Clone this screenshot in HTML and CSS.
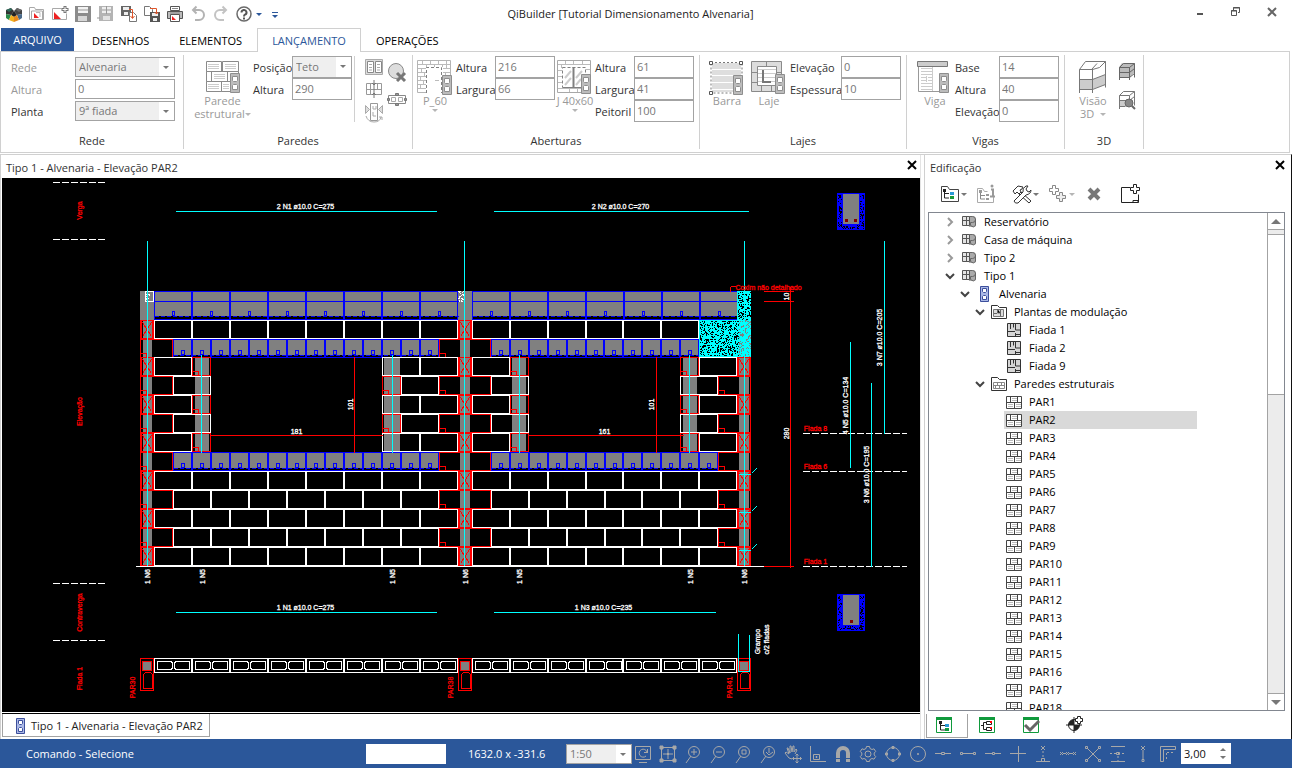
FILE: index.html
```html
<!DOCTYPE html>
<html lang="pt-BR">
<head>
    <meta charset="UTF-8">
    <meta name="viewport" content="width=device-width, initial-scale=1.0">
    <title>QiBuilder</title>
    <link rel="stylesheet" href="styles.css">
</head>
<body>
    <svg class="sprite" aria-hidden="true">
        <!-- quick access -->
        <symbol id="i-logo" viewBox="0 0 18 18">
            <path d="M1 5l5-2 3 3-3 4-5-1z" fill="#333"/><path d="M17 5l-5-2-3 3 3 4 5-1z" fill="#444"/>
            <path d="M1 5l5-2 1 2-3 2z" fill="#2d6a5a"/><path d="M17 5l-5-2-1 2 3 2z" fill="#666"/>
            <path d="M1 9l5 1-2 5-3-2z" fill="#2a8a4a"/><path d="M17 9l-5 1 2 5 3-2z" fill="#4a6a8a"/>
            <path d="M6 10l3-4 3 4-3 2z" fill="#222"/><path d="M4 15l2-5 3 2v5z" fill="#f3b01c"/><path d="M14 15l-2-5-3 2v5z" fill="#e8891c"/>
        </symbol>
        <symbol id="i-open" viewBox="0 0 18 18">
            <path d="M1.500 14.500v-12h5l1 2h8v10zM3.500 14v-8h11v8" fill="#fff" stroke="#a9a9a9"/>
            <path d="M6 13V8l5 5z" fill="#e22"/><path d="M8 7.500h4V12" fill="none" stroke="#bbb"/>
        </symbol>
        <symbol id="i-new" viewBox="0 0 18 18">
            <path d="M1.500 3.500h9m5 5v6h-14v-11" fill="#fff" stroke="#a9a9a9"/>
            <path d="M3 14V7l7 7z" fill="#e22"/><path d="M14 1v7M10.500 4.500h7" stroke="#777" stroke-width="3"/>
            <path d="M14 2v5M11.500 4.500h5" stroke="#fff"/>
        </symbol>
        <symbol id="i-save" viewBox="0 0 18 18">
            <path d="M1 1h16v16H1z" fill="#8b8b8b"/><path d="M4 2h10v6H4z" fill="#f2f2f2"/><path d="M4 11h9v5H4z" fill="#d6d6d6"/><path d="M4 5h10" stroke="#999"/>
        </symbol>
        <symbol id="i-saveall" viewBox="0 0 18 18">
            <path d="M2 1h14v15H2z" fill="#b4b4b4"/><path d="M5 2h9v6H5z" fill="#eee"/><path d="M9.500 1v8M5 5h9" stroke="#999"/><path d="M6 11h7v4H6z" fill="#e2e2e2"/><path d="M0 13h3" stroke="#999"/>
        </symbol>
        <symbol id="i-export" viewBox="0 0 18 18">
            <path d="M1 1h10v10H1z" fill="#666"/><path d="M3 2h6v3H3zM4 7h4v3H4z" fill="#eee"/>
            <path d="M9.500 7.500h4l3 3v6h-7z" fill="#fff" stroke="#777"/><path d="M9 4.500h3.500V13M10.500 11l2 2.500 2-2.500" fill="none" stroke="#e0552a"/>
        </symbol>
        <symbol id="i-import" viewBox="0 0 18 18">
            <path d="M1.500 1.500h5l3 3v6h-8z" fill="#fff" stroke="#777"/><path d="M7 7h10v10H7z" fill="#555"/><path d="M9 8h6v3H9zM10 13h4v3h-4z" fill="#eee"/>
            <path d="M7 3.500h6.500V9M11.500 7l2 2 2-2" fill="none" stroke="#e0552a"/>
        </symbol>
        <symbol id="i-print" viewBox="0 0 18 18">
            <path d="M4.500 1.500h9v4h-9z" fill="#fff" stroke="#555"/><path d="M1.500 6.500h15v7h-15z" fill="#bbb" stroke="#555"/>
            <path d="M4.500 9.500h9v7h-9z" fill="#fff" stroke="#555"/><path d="M6 15v-4l4 4z" fill="#e22"/><path d="M6 3.500h6M4 8h10" stroke="#888"/>
        </symbol>
        <symbol id="i-undo" viewBox="0 0 18 18"><path d="M4 5h6a5 5 0 0 1 0 10H6M7.500 1.500L4 5l3.500 3.500" fill="none" stroke="#b3b3b3" stroke-width="2"/></symbol>
        <symbol id="i-redo" viewBox="0 0 18 18"><path d="M14 5H8a5 5 0 0 0 0 10h4M10.500 1.500L14 5l-3.500 3.500" fill="none" stroke="#c3c3c3" stroke-width="2"/></symbol>
        <symbol id="i-help" viewBox="0 0 18 18">
            <circle cx="9" cy="9" r="7" fill="#fff" stroke="#6b6b6b" stroke-width="1.500"/><path d="M6.500 7.500a2.500 2.500 0 1 1 3.500 2.200q-1 .5-1 1.800M9 12.500v2" fill="none" stroke="#555" stroke-width="2"/>
        </symbol>

        <!-- ribbon -->
        <symbol id="cell" viewBox="0 0 10 20">
            <path d="M.5.5h9v19h-9z" fill="#bcbcbc" stroke="#8e8e8e"/>
            <path d="M2.500 3.500h5v4l-1 1h-3l-1-1zM2.500 16.500h5v-4l-1-1h-3l-1 1z" fill="#fff" stroke="#8e8e8e"/>
        </symbol>
        <symbol id="i-wall" viewBox="0 0 36 36">
            <g fill="#fff" stroke="#8a8a8a"><path d="M1.500 1.500h15v10h-15zM17.500 1.500h16v10h-16zM1.500 11.500h5v10h-5zM6.500 11.500h16v10h-16zM22.500 11.500h11v10h-11zM1.500 21.500h15v10h-15zM16.500 21.500h17v10h-17z"/></g>
            <path d="M3 4.500h11M3 6.500h11M3 8.500h11M20 4.500h11M20 6.500h11M20 8.500h11M9 14.500h11M9 16.500h11M9 18.500h11M3 24.500h11M3 26.500h11M3 28.500h11M18 24.500h6M18 26.500h6M18 28.500h6" stroke="#ccc"/>
            <use href="#cell" x="25" y="13" width="10" height="20"/>
        </symbol>
        <symbol id="i-door" viewBox="0 0 36 36">
            <path d="M.5.5h33v32H.5z" fill="#fff" stroke="#b4b4b4"/>
            <path d="M1 4.500h32M1 8.500h8M1 12.500h8M1 16.500h8M1 20.500h8M1 24.500h8M1 28.500h8M5.500 1v3M13.500 1v3M21.500 1v3M29.500 1v3M9.500 5v3M17.500 5v2M25.500 5v2M4.500 9v3M7.500 13v3M3.500 17v3M6.500 21v3M3.500 25v3M26 8.500h7M26 12.500h7M29.500 5v3M28.500 13v3" stroke="#bbb"/>
            <path d="M9.500 33V7.500h15V33" fill="#fff" stroke="#808080" stroke-dasharray="3 2"/><path d="M18 20.500h4" stroke="#bbb"/>
            <use href="#cell" x="25" y="15" width="10" height="20"/>
        </symbol>
        <symbol id="i-window" viewBox="0 0 36 36">
            <path d="M.5.5h33v32H.5z" fill="#fff" stroke="#a8a8a8"/>
            <path d="M1 4.500h32M1 10.500h4M1 16.500h4M1 22.500h4M1 28.500h24M8.500 1v3M16.500 1v3M25.500 1v3M4.500 5v3M12.500 29v3M20.500 29v3M29 9.500h4" stroke="#bbb"/>
            <path d="M5.500 7.500h23v20h-23z" fill="#fff" stroke="#808080" stroke-dasharray="3 2"/><path d="M16.500 7v21" stroke="#808080" stroke-width="2"/><path d="M6 27.500h19" stroke="#808080"/>
            <path d="M8 18l6-7M8 25l6-7M19 18l6-7M19 25l5-6" stroke="#ccc" stroke-width="2"/>
            <use href="#cell" x="24" y="14" width="10" height="20"/>
        </symbol>
        <symbol id="i-slab" viewBox="0 0 36 36">
            <path d="M3 3h29v6H3zM3 10h29v5H3zM3 16h29v6H3zM3 23h24v6H3zM3 30h24v2H3z" fill="#dedede"/>
            <path d="M2 2.500h31V33H2z" fill="none" stroke="#777" stroke-dasharray="2 2"/>
            <path d="M.5 1.500h3v3h-3zM30.500 1.500h3v3h-3zM.5 31.500h3v3h-3z" fill="#fff" stroke="#555"/>
            <use href="#cell" x="24" y="15" width="10" height="20"/>
        </symbol>
        <symbol id="i-laje" viewBox="0 0 36 36">
            <path d="M.5 1.500h30v30H.5z" fill="#ddd" stroke="#8a8a8a"/><path d="M6.500 6.500h19v19h-19z" fill="#fff" stroke="#8a8a8a"/>
            <path d="M15.500 2v4M1 12.500h5M1 22.500h5M10.500 26v5M20.500 26v5M26 12.500h4" stroke="#8a8a8a"/><path d="M7 9.500h18M7 13.500h18M7 17.500h18M7 21.500h18" stroke="#ccc"/>
            <path d="M12 10v12h8" fill="none" stroke="#777" stroke-width="2"/>
            <use href="#cell" x="24" y="14" width="10" height="20"/>
        </symbol>
        <symbol id="i-beam" viewBox="0 0 36 36">
            <path d="M.5 1.500h30v5H.5z" fill="#ccc" stroke="#777"/><path d="M1.500 7v24.500H22" fill="none" stroke="#999"/>
            <path d="M4 8.500h11M4 11.500h11M4 14.500h11M4 17.500h5M11 17.500h4M4 20.500h5M11 20.500h4M4 23.500h11M4 26.500h11M4 29.500h11M9.500 16v6M15.500 7v24" stroke="#ccc"/>
            <use href="#cell" x="22" y="13" width="10" height="20"/>
        </symbol>
        <symbol id="i-view" viewBox="0 0 36 36">
            <path d="M4 19h14v10H4zM18 19l12-4v10l-12 4z" fill="#ccc"/>
            <path d="M4.500 33V9.500l6-8h20l-6 6M30.500 1.500v26M4.500 9.500h12.500M17.500 9v24M17.500 9.500l7-2M4.500 19.500h13l13-5M4.500 29.500h13l13-5M22 3.500L17 9" fill="none" stroke="#777"/>
        </symbol>
        <symbol id="i-box" viewBox="0 0 20 20">
            <path d="M2 6h11v10H2zM13 6l4-4v10l-4 4zM5 2h12l-4 4H2z" fill="#bbb"/>
            <path d="M2.500 19V6.500l4-4h11v14M2.500 6.500h10M12.500 6v13M12.500 6.500l5-4M2.500 11.500h10l5-4M2.500 16.500h10l5-4" fill="none" stroke="#666"/>
        </symbol>
        <symbol id="i-boxfind" viewBox="0 0 20 20">
            <path d="M2 10h11v6H2z" fill="#ccc"/>
            <path d="M2.500 19V5.500l4-4h11v14M2.500 5.500h10v8M12.500 5.500l5-4M2.500 10.500h10l5-4M2.500 16.500h6" fill="none" stroke="#777"/><circle cx="12" cy="13" r="4" fill="#888" stroke="#666"/><path d="M15 16l3 3" stroke="#666" stroke-width="2"/>
        </symbol>
        <symbol id="i-w1" viewBox="0 0 20 18"><path d="M1.500 1.500h17v15h-17z" fill="#ddd" stroke="#aaa"/><path d="M3.500 3.500h6v11h-6zM11.500 3.500h6v11h-6z" fill="#fff" stroke="#888"/><path d="M5 6.500h3M5 9.500h3M5 12h3M13 6.500h3M13 9.500h3M13 12h3" stroke="#aaa"/></symbol>
        <symbol id="i-w2" viewBox="0 0 20 18"><path d="M2.500 3.500h15v11h-15z" fill="#fff" stroke="#999"/><path d="M2 9.500h16M6.500 4v5M13.500 4v5M6.500 10v4" stroke="#999"/><path d="M10 0v5M10 13v5M8 3l2 2 2-2M8 15l2-2 2 2" fill="none" stroke="#777"/><path d="M10 5v8" stroke="#777"/></symbol>
        <symbol id="i-w3" viewBox="0 0 20 22"><path d="M1.500 3.500l4 4-4 4zM18.500 3.500l-4 4 4 4z" fill="#ddd" stroke="#aaa"/><path d="M6.500 1.500h7v17h-7z" fill="#fff" stroke="#999"/><path d="M9 4v3h3v-3M9 10v4h3" fill="none" stroke="#aaa"/><path d="M2 14q2 6 8 6t7-5M15 15h3v3" fill="none" stroke="#aaa"/></symbol>
        <symbol id="i-w4" viewBox="0 0 20 20"><circle cx="9" cy="9" r="7.500" fill="#ddd" stroke="#888"/><path d="M10 11l8 8M18 11l-8 8" stroke="#777" stroke-width="3"/></symbol>
        <symbol id="i-w5" viewBox="0 0 20 14"><path d="M1.500 3.500h17v8h-17z" fill="#fff" stroke="#888"/><path d="M4.500 5.500h4v4h-4zM11.500 5.500h4v4h-4z" fill="#fff" stroke="#aaa"/><path d="M8.500 1.500h3v2h-3zM8.500 11.500h3v2h-3zM.5 6.500h2v2h-2zM17.500 6.500h2v2h-2z" fill="#999" stroke="#777"/></symbol>

        <!-- project panel -->
        <symbol id="i-ptree" viewBox="0 0 20 20"><path d="M1.500 17.500v-15h6l2 3h9v12z" fill="#fff" stroke="#444"/><path d="M4.500 6v8H9M4.500 9.500H9" fill="none" stroke="#222"/><path d="M3 5h3v3H3z" fill="#222"/><path d="M10 8h4v3h-4z" fill="#2a9ad6"/><path d="M10 12h4v3h-4z" fill="#1a9a3a"/></symbol>
        <symbol id="i-pinfo" viewBox="0 0 20 20"><path d="M1.500 18.500v-14h5l2 3h3M1.500 18.500h16v-7" fill="#fff" stroke="#aaa"/><path d="M4.500 7v8H9M4.500 11.500H9" fill="none" stroke="#888"/><path d="M3 6h3v3H3zM10 10h3v2h-3zM10 14h3v2h-3z" fill="#999"/><path d="M15 5.500h2v6M14 12.500h5" fill="none" stroke="#999" stroke-width="2"/><circle cx="16" cy="2" r="1.500" fill="#999"/></symbol>
        <symbol id="i-tools" viewBox="0 0 20 20"><path d="M9 8l10 9-2 2-10-9zM1 7l5-5 5 1-1 2-2 1 1 2-2 2-2-2-2 2z" fill="#fff" stroke="#333"/><path d="M2 17l9-9q-1-4 3-6h2l-2 3 1 2 2 1 2-2q0 4-5 5l-8 8q-3 1-4-2z" fill="#fff" stroke="#333"/></symbol>
        <symbol id="i-plus2" viewBox="0 0 20 20"><path d="M4.500 1.500h3v3h3v3h-3v3h-3v-3h-3v-3h3z" fill="#fff" stroke="#888"/><path d="M11.500 8.500h3v3h3v3h-3v3h-3v-3h-3v-3h3z" fill="#eee" stroke="#888"/></symbol>
        <symbol id="i-del" viewBox="0 0 20 20"><path d="M5 5l10 10M15 5L5 15" stroke="#777" stroke-width="4"/></symbol>
        <symbol id="i-addwin" viewBox="0 0 20 20"><path d="M10 3.500H1.500v15h17v-8" fill="none" stroke="#222"/><path d="M13 16.500h5v2h-5z" fill="#fff" stroke="#222"/><path d="M13.500.5h3v3h3v3h-3v3h-3v-3h-3v-3h3z" fill="#fff" stroke="#222"/></symbol>
        <symbol id="t-floor" viewBox="0 0 16 16"><path d="M7 2h4q4 0 4 4v5q0 2-2 2h-5" fill="#aaa"/><path d="M1.500 2.500h7v9h-7zM1 6.500h8M5.500 2v10" fill="#e4e4e4" stroke="#555"/><path d="M8.500 2.500h3q3 0 3 3t-3 3h-2v3q3 3 5 0V5" fill="none" stroke="#666"/></symbol>
        <symbol id="t-cell" viewBox="0 0 16 16"><path d="M4.500.5h8v15h-8z" fill="#aab8e6" stroke="#3c4f9c"/><path d="M6.500 2.500h4v3l-1 1h-2l-1-1zM6.500 13.500h4v-3l-1-1h-2l-1 1z" fill="#fff" stroke="#3c4f9c"/></symbol>
        <symbol id="t-plans" viewBox="0 0 16 16"><path d="M.5 14.500v-13h6l2 2h7v11z" fill="#fff" stroke="#333"/><path d="M2.500 5.500h10v7h-10z" fill="#ddd" stroke="#777"/><path d="M6.500 5v4h3M9.500 6v6M3 9.500h3" stroke="#666"/></symbol>
        <symbol id="t-walls" viewBox="0 0 16 16"><path d="M.5 14.500v-13h6l2 2h7v11z" fill="#fff" stroke="#333"/><path d="M2.500 6.500h11v6h-11zM2 9.500h12M6.500 6v3M10.500 6v3M4.500 10v3M8.500 10v3" fill="none" stroke="#888"/></symbol>
        <symbol id="t-plan" viewBox="0 0 16 16"><path d="M1.500 1.500h13v13h-13z" fill="#d6d6d6" stroke="#333"/><path d="M4.500 2v5M7.500 5.500v-4M9.500 2v6h5M1 9.500h8M9.500 11v3M10 12.500h4" fill="none" stroke="#333"/></symbol>
        <symbol id="t-wall" viewBox="0 0 16 16"><path d="M.5 2.500h15v12H.5z" fill="#fff" stroke="#444"/><path d="M1 8.500h14M4.500 3v5M11.500 3v5M8.500 9v5" stroke="#444"/><path d="M6 4.500h5M6 6.500h5M2 10.500h5M2 12.500h5M10 10.500h5M10 12.500h5" stroke="#bbb"/></symbol>
        <symbol id="b-tree" viewBox="0 0 18 18"><path d="M1.500 1.500h15v15h-15z" fill="#fff" stroke="#109a3c"/><path d="M1 1h16v3H1z" fill="#109a3c"/><path d="M5.500 6v8H10M5.500 9.500H10" fill="none" stroke="#222"/><path d="M4 5h3v3H4z" fill="#222"/><path d="M10 8h4v3h-4z" fill="#2a9ad6"/><path d="M10 12h4v3h-4z" fill="#109a3c"/></symbol>
        <symbol id="b-list" viewBox="0 0 18 18"><path d="M1.500 1.500h15v15h-15z" fill="#fff" stroke="#109a3c"/><path d="M1 1h16v3H1z" fill="#109a3c"/><path d="M3 9.500h2M8 6.500H5.500v7H8M8.500 5.500h5v3h-5zM8.500 11.500h5v3h-5z" fill="none" stroke="#222"/><path d="M12 5h2v2h-2zM12 11h2v2h-2z" fill="red"/></symbol>
        <symbol id="b-check" viewBox="0 0 18 18"><path d="M1.500 1.500h15v15h-15z" fill="#fff" stroke="#109a3c"/><path d="M1 1h16v3H1z" fill="#109a3c"/><path d="M3 9l5 5 9-9" fill="none" stroke="#666" stroke-width="3"/></symbol>
        <symbol id="b-target" viewBox="0 0 18 18"><circle cx="8" cy="9" r="5.500" fill="#fff" stroke="#222"/><path d="M8 9V3.500A5.500 5.500 0 0 0 2.500 9zM8 9v5.500A5.500 5.500 0 0 0 13.500 9z" fill="#222"/><path d="M8 1v16M0 9h16" stroke="#222"/><path d="M11.500.5h3v2h2v3h-2v2h-3v-2h-2v-3h2z" fill="#fff" stroke="#222"/></symbol>

        <!-- status bar -->
        <symbol id="s-monitor" viewBox="0 0 20 20"><path d="M2.500 2.500h15v13h-15zM6 18.500h8M14 8a4 4 0 1 0-1 4M11 8.500h4M14.500 5v4"/></symbol>
        <symbol id="s-extents" viewBox="0 0 20 20"><path d="M3.500 5v10M16.500 5v10M5 3.500h10M5 16.500h10"/><path d="M2 2h3v3H2zM15 2h3v3h-3zM2 15h3v3H2zM15 15h3v3h-3zM9 9h2v2H9z" fill="#a8a8a8"/><path d="M10 5v3M10 12v3M5 10h3M12 10h3"/></symbol>
        <symbol id="s-zin" viewBox="0 0 20 20"><circle cx="11" cy="8" r="5.500"/><path d="M8 12l-5 7M11 5v6M8 8h6"/></symbol>
        <symbol id="s-zout" viewBox="0 0 20 20"><circle cx="11" cy="8" r="5.500"/><path d="M8 12l-5 7M8 8h6"/></symbol>
        <symbol id="s-zwin" viewBox="0 0 20 20"><circle cx="11" cy="8" r="5.500"/><path d="M8 12l-5 7M9 6h4v4H9z"/></symbol>
        <symbol id="s-zprev" viewBox="0 0 20 20"><circle cx="11" cy="8" r="5.500"/><path d="M8 12l-5 7M11 4v5M8 8l3 3 4-3"/></symbol>
        <symbol id="s-pan" viewBox="0 0 20 20"><path d="M9 15l-3-1-4-5 1-1 3 2-2-6h1l2 5V2h1l1 6 1-6h1v6l2-3 1 1-2 4"/><path d="M14 10v9M9.500 14.500h9M12.500 11.500L14 10l1.500 1.500M12.500 17.500L14 19l1.500-1.500M11 13l-1.500 1.500L11 16M17 13l1.500 1.500L17 16"/></symbol>
        <symbol id="s-ortho" viewBox="0 0 20 20"><path d="M2.500 2v15.500H18M5.500 10.500h6v5h-6zM8 12.500h1v1H8z"/></symbol>
        <symbol id="s-magnet" viewBox="0 0 20 20"><path d="M5 14V9a5 5 0 0 1 10 0v5" stroke-width="4"/><path d="M3 16.500h4M13 16.500h4" stroke-width="3"/></symbol>
        <symbol id="s-gear" viewBox="0 0 20 20"><circle cx="10" cy="10" r="3"/><path d="M8.500 2.500h3l.5 2 2 1 2-.7 1.700 2.700-1.500 1.500v2l1.500 1.500-1.700 2.700-2-.7-2 1-.5 2h-3l-.5-2-2-1-2 .7-1.700-2.700 1.500-1.500V9L2.300 7.500 4 4.800l2 .7 2-1z"/></symbol>
        <symbol id="s-quad" viewBox="0 0 20 20"><circle cx="10" cy="10" r="6.500"/><path d="M9 2.500h2v2H9zM9 15.500h2v2H9zM2.500 9h2v2h-2zM15.500 9h2v2h-2z"/></symbol>
        <symbol id="s-center" viewBox="0 0 20 20"><circle cx="10" cy="10" r="7.500"/><path d="M9.500 9.500h1v1h-1z"/></symbol>
        <symbol id="s-mid" viewBox="0 0 20 20"><path d="M2 9.500h7M12 9.500h6M8.500 8.500h3v2h-3z"/></symbol>
        <symbol id="s-end" viewBox="0 0 20 20"><path d="M5 9.500h10M2.500 8.500h2v2h-2zM15.500 8.500h2v2h-2z"/></symbol>
        <symbol id="s-near" viewBox="0 0 20 20"><path d="M2 9.500h7M12 9.500h6M9.500 8.500h2v2h-2z"/></symbol>
        <symbol id="s-cross" viewBox="0 0 20 20"><path d="M2 9.500h16M10.500 2v16"/></symbol>
        <symbol id="s-perp" viewBox="0 0 20 20"><path d="M8 2l4 4M12 2L8 6M3 17.500h14M8.500 14.500h3v3h-3z"/><path d="M10 7v7" stroke-dasharray="2 2"/></symbol>
        <symbol id="s-ext" viewBox="0 0 20 20"><path d="M2 8l3 3M5 8l-3 3M8 8l3 3M11 8l-3 3M15 8l3 3M18 8l-3 3M5 9.500h3M11 9.500h4"/></symbol>
        <symbol id="s-inter" viewBox="0 0 20 20"><path d="M4 4l12 12M16 4L4 16M2.500 2.500h2v2h-2zM15.500 2.500h2v2h-2zM2.500 15.500h2v2h-2zM15.500 15.500h2v2h-2z"/></symbol>
        <symbol id="s-par" viewBox="0 0 20 20"><path d="M3 2.500h14M3 17.500h14M8.500 8.500h3v2h-3z"/><path d="M2 9.500h16M10 12v5" stroke-dasharray="2 2"/></symbol>
        <symbol id="s-point" viewBox="0 0 20 20"><path d="M8 2l4 4M12 2L8 6M10 6v10M9 15.500h2v2H9z"/></symbol>
        <symbol id="s-corner" viewBox="0 0 20 20"><path d="M2.500 17.500v-15h15v3h-12v12z"/><path d="M9 8.500h8M8.500 9v8" stroke-dasharray="2 2"/></symbol>
    </svg>

    <header class="titlebar">
        <div class="quick">
            <button class="qbtn" aria-label="QiBuilder"><svg><use href="#i-logo"/></svg></button>
            <button class="qbtn" aria-label="Abrir"><svg><use href="#i-open"/></svg></button>
            <button class="qbtn" aria-label="Novo"><svg><use href="#i-new"/></svg></button>
            <button class="qbtn" aria-label="Salvar"><svg><use href="#i-save"/></svg></button>
            <button class="qbtn" aria-label="Salvar tudo"><svg><use href="#i-saveall"/></svg></button>
            <button class="qbtn" aria-label="Exportar"><svg><use href="#i-export"/></svg></button>
            <button class="qbtn" aria-label="Importar"><svg><use href="#i-import"/></svg></button>
            <button class="qbtn" aria-label="Imprimir"><svg><use href="#i-print"/></svg></button>
            <button class="qbtn" aria-label="Desfazer"><svg><use href="#i-undo"/></svg></button>
            <button class="qbtn" aria-label="Refazer"><svg><use href="#i-redo"/></svg></button>
            <button class="qbtn" aria-label="Ajuda"><svg><use href="#i-help"/></svg></button>
            <i class="caret blue"></i>
            <i class="caret blue bar"></i>
        </div>
        <h1>QiBuilder [Tutorial Dimensionamento Alvenaria]</h1>
        <div class="winbtns">
            <button aria-label="Minimizar"><svg width="12" height="12"><path d="M3 8h6" stroke="#555" stroke-width="2"/></svg></button>
            <button aria-label="Restaurar"><svg width="12" height="12" fill="none" stroke="#555"><path d="M3.500 4V1.500h6v5H8M1.500 4.500h5v5h-5zM3 2h7M1 5h6"/></svg></button>
            <button aria-label="Fechar"><svg width="12" height="12"><path d="M2 2l8 8M10 2l-8 8" stroke="#666" stroke-width="2"/></svg></button>
        </div>
    </header>

    <nav class="tabs">
        <button class="tab file">ARQUIVO</button>
        <button class="tab">DESENHOS</button>
        <button class="tab">ELEMENTOS</button>
        <button class="tab active">LANÇAMENTO</button>
        <button class="tab">OPERAÇÕES</button>
    </nav>

    <section class="ribbon">
        <div class="group">
            <div class="group-body">
                <div class="fields rede">
                    <label class="dim" for="rede">Rede</label>
                    <span class="drop"><select id="rede"><option>Alvenaria</option></select></span>
                    <label class="dim" for="redeAltura">Altura</label>
                    <input id="redeAltura" value="0">
                    <label for="planta">Planta</label>
                    <span class="drop"><select id="planta"><option>9ª fiada</option></select></span>
                </div>
            </div>
            <div class="group-title">Rede</div>
        </div>
        <div class="group paredes">
            <div class="group-body">
                <button class="big wide"><svg class="icon36"><use href="#i-wall"/></svg><span>Parede<br>estrutural<i class="caret"></i></span></button>
                <div class="fields c39">
                    <label for="posicao">Posição</label>
                    <span class="drop"><select id="posicao"><option>Teto</option></select></span>
                    <label for="paredeAltura">Altura</label>
                    <input id="paredeAltura" value="290">
                </div>
                <div class="minis">
                    <div class="mini-col">
                        <button aria-label="Blocos"><svg width="20" height="18"><use href="#i-w1"/></svg></button>
                        <button aria-label="Dividir"><svg width="20" height="18"><use href="#i-w2"/></svg></button>
                        <button aria-label="Inverter"><svg width="20" height="22"><use href="#i-w3"/></svg></button>
                    </div>
                    <div class="mini-col second">
                        <button aria-label="Remover"><svg width="20" height="20"><use href="#i-w4"/></svg></button>
                        <button aria-label="Bloco"><svg width="20" height="14"><use href="#i-w5"/></svg></button>
                    </div>
                </div>
            </div>
            <div class="group-title">Paredes</div>
        </div>
        <div class="group">
            <div class="group-body tight">
                <button class="big"><svg class="icon36"><use href="#i-door"/></svg><span>P_60</span><i class="caret"></i></button>
                <div class="fields c39">
                    <label for="portaAltura">Altura</label>
                    <input id="portaAltura" value="216">
                    <label for="portaLargura">Largura</label>
                    <input id="portaLargura" value="66">
                </div>
                <button class="big mid"><svg class="icon36"><use href="#i-window"/></svg><span>J 40x60</span><i class="caret"></i></button>
                <div class="fields c39">
                    <label for="janelaAltura">Altura</label>
                    <input id="janelaAltura" value="61">
                    <label for="janelaLargura">Largura</label>
                    <input id="janelaLargura" value="41">
                    <label for="peitoril">Peitoril</label>
                    <input id="peitoril" value="100">
                </div>
            </div>
            <div class="group-title">Aberturas</div>
        </div>
        <div class="group">
            <div class="group-body slabs">
                <button class="big"><svg class="icon36"><use href="#i-slab"/></svg><span>Barra</span></button>
                <button class="big"><svg class="icon36"><use href="#i-laje"/></svg><span>Laje</span></button>
                <div class="fields c51">
                    <label for="lajeElevacao">Elevação</label>
                    <input id="lajeElevacao" value="0">
                    <label for="espessura">Espessura</label>
                    <input id="espessura" value="10">
                </div>
            </div>
            <div class="group-title">Lajes</div>
        </div>
        <div class="group">
            <div class="group-body beams">
                <button class="big"><svg class="icon36"><use href="#i-beam"/></svg><span>Viga</span></button>
                <div class="fields c44">
                    <label for="base">Base</label>
                    <input id="base" value="14">
                    <label for="vigaAltura">Altura</label>
                    <input id="vigaAltura" value="40">
                    <label for="vigaElevacao">Elevação</label>
                    <input id="vigaElevacao" value="0">
                </div>
            </div>
            <div class="group-title">Vigas</div>
        </div>
        <div class="group">
            <div class="group-body views">
                <button class="big"><svg class="icon36"><use href="#i-view"/></svg><span>Visão<br>3D &nbsp;<i class="caret"></i></span></button>
                <div class="mini-col view-col">
                    <button aria-label="Vista"><svg width="20" height="20"><use href="#i-box"/></svg></button>
                    <button aria-label="Localizar"><svg width="20" height="20"><use href="#i-boxfind"/></svg></button>
                </div>
            </div>
            <div class="group-title">3D</div>
        </div>
    </section>

    <main>
        <section class="document">
            <div class="panel-head">
                <h2>Tipo 1 - Alvenaria - Elevação PAR2</h2>
                <button aria-label="Fechar desenho"><svg width="10" height="10"><path d="M1 1l8 8M9 1L1 9" stroke="#000" stroke-width="2"/></svg></button>
            </div>
            <svg id="drawing" viewBox="1.5 177.500 918 536" preserveAspectRatio="xMinYMin meet"></svg>
            <div class="doc-tabs">
                <button class="doc-tab"><svg width="16" height="16"><use href="#t-cell"/></svg>Tipo 1 - Alvenaria - Elevação PAR2</button>
            </div>
        </section>

        <aside class="project">
            <div class="panel-head">
                <h2>Edificação</h2>
                <button aria-label="Fechar painel"><svg width="10" height="10"><path d="M1 1l8 8M9 1L1 9" stroke="#000" stroke-width="2"/></svg></button>
            </div>
            <div class="toolbar">
                <button aria-label="Projeto"><svg><use href="#i-ptree"/></svg><i class="caret dark"></i></button>
                <button aria-label="Propriedades"><svg><use href="#i-pinfo"/></svg></button>
                <button aria-label="Ferramentas"><svg><use href="#i-tools"/></svg><i class="caret dark"></i></button>
                <button aria-label="Adicionar"><svg><use href="#i-plus2"/></svg><i class="caret"></i></button>
                <button aria-label="Excluir"><svg><use href="#i-del"/></svg></button>
                <button aria-label="Nova janela"><svg><use href="#i-addwin"/></svg></button>
            </div>
            <div class="tree-box">
                <ul class="tree" id="tree"></ul>
                <div class="scroll">
                    <button aria-label="Subir"><i class="tri up"></i></button>
                    <div class="split"></div>
                    <div class="thumb"></div>
                    <div class="track"></div>
                    <button aria-label="Descer"><i class="tri"></i></button>
                </div>
            </div>
            <div class="side-tabs">
                <button class="side-tab active" aria-label="Projeto"><svg width="18" height="18"><use href="#b-tree"/></svg></button>
                <button class="side-tab" aria-label="Lista"><svg width="18" height="18"><use href="#b-list"/></svg></button>
                <button class="side-tab" aria-label="Verificar"><svg width="18" height="18"><use href="#b-check"/></svg></button>
                <button class="side-tab" aria-label="Referência"><svg width="18" height="18"><use href="#b-target"/></svg></button>
            </div>
        </aside>
    </main>

    <footer class="status">
        <label class="command" for="command">Comando - Selecione</label>
        <input id="command" class="command-input">
        <span class="coords">1632.0 x -331.6</span>
        <span class="drop scale"><select aria-label="Escala"><option>1:50</option></select></span>
        <div class="snaps" id="snaps"></div>
        <div class="spin">
            <input aria-label="Passo" value="3,00">
            <span><i class="tri up"></i><i class="tri"></i></span>
        </div>
    </footer>

    <script src="script.js"></script>
</body>
</html>
```

FILE: styles.css
```css
* {
    box-sizing: border-box;
}
body {
    margin: 0;
    height: 100vh;
    display: flex;
    flex-direction: column;
    background: #fff;
    color: #333;
    font-family: "Open Sans", "Noto Sans", sans-serif;
    font-size: 11px;
    line-height: 14px;
    overflow: hidden;
}
button,
input,
select {
    font: inherit;
    color: inherit;
    margin: 0;
    padding: 0;
    border: 0;
    border-radius: 0;
    background: none;
}
h1,
h2 {
    margin: 0;
    font-size: 11px;
    font-weight: normal;
}
svg {
    display: block;
}
.sprite {
    position: absolute;
    width: 0;
    height: 0;
}
.caret {
    display: inline-block;
    flex: none;
    border: 3px solid transparent;
    border-top-color: #b5b5b5;
    border-bottom: 0;
}
.caret.dark {
    border-top-color: #777;
}
.caret.blue {
    border-top-color: #2b579a;
}
.caret.bar {
    position: relative;
    margin: 4px 0 0 10px;
}
.caret.bar::before {
    content: "";
    position: absolute;
    left: -3px;
    top: -6px;
    width: 6px;
    height: 1px;
    background: #2b579a;
}

/* title bar */
.titlebar {
    display: grid;
    grid-template-columns: 1fr auto 1fr;
    align-items: center;
    flex: none;
    height: 28px;
    padding: 0 10px 0 3px;
}
.titlebar h1 {
    color: #222;
    margin-right: 24px;
}
.quick {
    display: flex;
    align-items: center;
}
.qbtn {
    width: 23px;
    height: 24px;
    padding: 2px;
}
.qbtn svg {
    width: 18px;
    height: 18px;
}
.winbtns {
    display: flex;
    justify-content: flex-end;
    gap: 24px;
    padding-right: 4px;
    margin-top: -4px;
}

/* tabs */
.tabs {
    display: flex;
    flex: none;
    height: 24px;
    margin-bottom: -1px;
    padding-left: 1px;
    position: relative;
    color: #000;
}
.tab {
    height: 24px;
    padding: 0 14px;
    border: 1px solid transparent;
    border-bottom: 0;
}
.tab.file {
    width: 73px;
    height: 23px;
    padding: 0;
    margin-right: 3px;
    background: #2b579a;
    color: #fff;
}
.tab.active {
    border-color: #d0d0d0;
    background: #fff;
    color: #2b579a;
}

/* ribbon */
.ribbon {
    display: flex;
    flex: none;
    height: 102px;
    margin: 0 2px 1px 0;
    padding: 3px 0;
    border: 1px solid #d0d0d0;
}
.group {
    display: flex;
    flex-direction: column;
    border-right: 1px solid #d0d0d0;
}
.group-body {
    display: flex;
    height: 66px;
    margin-top: 1px;
}
.group-title {
    margin-top: 12px;
    text-align: center;
}
.fields {
    display: grid;
    grid-auto-rows: 22px;
    align-items: stretch;
    align-content: start;
    white-space: nowrap;
    color: #333;
}
.fields label {
    line-height: 24px;
}
.fields label.dim {
    color: #999;
}
.fields input {
    width: 100%;
    min-width: 0;
    padding: 0 2px;
    border: 1px solid #a3a3a3;
    color: #777;
}
.rede {
    grid-template-columns: 64px 100px;
    grid-auto-rows: 20px;
    row-gap: 2px;
    padding: 1px 8px 0 10px;
}
.rede label {
    line-height: 22px;
}
.c39 {
    grid-template-columns: 39px 60px;
}
.c44 {
    grid-template-columns: 44px 60px;
}
.c51 {
    grid-template-columns: 51px 60px;
}
.drop {
    position: relative;
    display: block;
    border: 1px solid #a3a3a3;
    background: #fff;
}
.drop select {
    display: block;
    width: calc(100% - 15px);
    height: 100%;
    padding: 0 3px;
    appearance: none;
    background: #efefef;
    color: #777;
    border-radius: 0;
}
.drop::after {
    content: "";
    position: absolute;
    right: 5px;
    top: 8px;
    border: 3px solid transparent;
    border-top-color: #777;
    border-bottom: 0;
}
.big {
    display: flex;
    flex-direction: column;
    align-items: center;
    flex: none;
    width: 42px;
    padding-top: 4px;
    color: #999;
    line-height: 13px;
    white-space: nowrap;
}
.icon36 {
    flex: none;
    width: 36px;
    height: 36px;
    margin-bottom: -2px;
}
.big .caret {
    margin: 2px 0;
}
.paredes .group-body {
    padding-left: 8px;
}
.big.wide {
    width: 61px;
}
.minis {
    display: flex;
    gap: 3px;
    margin-left: 2px;
    padding-left: 9px;
    border-left: 1px solid #d0d0d0;
}
.mini-col {
    display: flex;
    flex-direction: column;
    gap: 4px;
    padding-top: 2px;
}
.mini-col.second {
    padding: 6px 5px 0 0;
    gap: 10px;
}
.tight {
    padding: 0 5px 0 1px;
}
.big.mid {
    width: 40px;
}
.slabs {
    padding: 0 5px 0 6px;
}
.beams {
    padding: 0 5px 0 8px;
}
.beams .big {
    width: 40px;
}
.views {
    padding: 0 5px 0 7px;
}
.view-col {
    gap: 9px;
    padding: 5px 1px 0 3px;
}

/* work area */
main {
    display: flex;
    flex: 1;
    min-height: 0;
    border-top: 1px solid #d0d0d0;
    border-right: 1px solid #111;
}
.document {
    display: flex;
    flex-direction: column;
    flex: 1;
    min-width: 0;
    border-left: 1px solid #d0d0d0;
    padding-left: 1px;
    border-right: 1px solid #e4e4e4;
}
.panel-head {
    display: flex;
    flex: none;
    justify-content: space-between;
    align-items: center;
    height: 23px;
    padding: 2px 3px 0 4px;
}
.panel-head button {
    margin-top: -5px;
}
#drawing {
    flex: 1;
    width: 100%;
    min-height: 0;
    background: #000;
    font-family: "Liberation Sans", Arial, sans-serif;
    font-size: 7px;
}
#drawing text {
    stroke-width: 0.3;
}
.doc-tabs {
    flex: none;
    height: 25px;
}
.doc-tab {
    display: flex;
    align-items: center;
    gap: 3px;
    height: 23px;
    padding: 2px 6px 0 9px;
    border: 1px solid #a3a3a3;
    border-top: 0;
    color: #222;
}
.project {
    display: flex;
    flex-direction: column;
    flex: none;
    width: 367px;
    margin-left: 3px;
    border-left: 1px solid #d0d0d0;
}
.project .panel-head {
    padding: 2px 6px 0 5px;
}
.toolbar {
    display: flex;
    flex: none;
    height: 34px;
    padding: 5px 0 0 15px;
    gap: 1px;
}
.toolbar button {
    display: flex;
    align-items: center;
    gap: 1px;
    width: 35px;
    height: 22px;
}
.toolbar svg {
    width: 20px;
    height: 20px;
}
.tree-box {
    display: flex;
    flex: 1;
    min-height: 0;
    margin: 0 6px 3px 3px;
    border: 1px solid #828790;
}
.tree {
    flex: 1;
    margin: 0;
    padding: 0;
    overflow: hidden;
    list-style: none;
    color: #000;
}
.tree li {
    display: flex;
    height: 18px;
    padding-left: 11px;
}
.tree .l1 {
    padding-left: 26px;
}
.tree .l2 {
    padding-left: 41px;
}
.tree .l3 {
    padding-left: 56px;
}
.arrow {
    width: 19px;
    padding: 4px 5px;
}
.node {
    display: flex;
    align-items: center;
    gap: 7px;
    height: 18px;
    padding-left: 2px;
}
.node.selected {
    width: 193px;
    background: #d9d9d9;
}
.scroll {
    display: flex;
    flex-direction: column;
    width: 17px;
    border-left: 1px solid #a3a3a3;
}
.scroll button {
    display: flex;
    align-items: center;
    justify-content: center;
    height: 17px;
    border-bottom: 1px solid #a3a3a3;
}
.scroll button:last-child {
    border-top: 1px solid #a3a3a3;
    border-bottom: 0;
}
.tri {
    border: 5px solid transparent;
    border-top-color: #777;
    border-bottom: 0;
}
.tri.up {
    border: 5px solid transparent;
    border-bottom-color: #777;
    border-top: 0;
}
.split {
    height: 5px;
    background: #ececec;
    border-bottom: 1px solid #a3a3a3;
}
.thumb {
    flex: 160;
    border-bottom: 1px solid #a3a3a3;
}
.track {
    flex: 299;
    background: #ececec;
}
.side-tabs {
    display: flex;
    flex: none;
    height: 25px;
    padding-left: 1px;
}
.side-tab {
    display: flex;
    width: 44px;
    height: 24px;
    padding: 2px 0 0 9px;
}
.side-tab.active {
    width: 42px;
    margin-right: 1px;
    padding-left: 8px;
    border: 1px solid #a3a3a3;
    border-top: 0;
}

/* status bar */
.status {
    display: flex;
    align-items: center;
    flex: none;
    height: 29px;
    padding-left: 26px;
    background: #2b579a;
    color: #fff;
}
.command {
    width: 340px;
}
.command-input {
    width: 80px;
    height: 20px;
    background: #fff;
    color: #333;
}
.coords {
    width: 98px;
    margin-left: 22px;
}
.scale {
    width: 66px;
    height: 20px;
}
.snaps {
    display: flex;
    gap: 5px;
    margin-left: 1px;
}
.snaps svg {
    width: 20px;
    height: 20px;
    fill: none;
    stroke: #a8a8a8;
}
.spin {
    display: flex;
    width: 50px;
    height: 21px;
    margin-left: 3px;
    padding: 0 3px;
    background: #fff;
    color: #111;
}
.spin input {
    width: 36px;
}
.spin span {
    display: flex;
    flex-direction: column;
    justify-content: space-evenly;
}
.spin .tri {
    border-left-width: 3px;
    border-right-width: 3px;
    border-top-width: 3px;
}
.spin .tri.up {
    border-top-width: 0;
    border-bottom-width: 3px;
}
```

FILE: script.js
```js
// ---- project tree ----
const nodes = [
    [0, "floor", "Reservatório", "closed"],
    [0, "floor", "Casa de máquina", "closed"],
    [0, "floor", "Tipo 2", "closed"],
    [0, "floor", "Tipo 1", "open"],
    [1, "cell", "Alvenaria", "open"],
    [2, "plans", "Plantas de modulação", "open"],
    [3, "plan", "Fiada 1"],
    [3, "plan", "Fiada 2"],
    [3, "plan", "Fiada 9"],
    [2, "walls", "Paredes estruturais", "open"]
];
for (let i = 1; i <= 18; i++) nodes.push([3, "wall", "PAR" + i]);

const arrows = {
    closed: '<path d="M3 1l4 4-4 4" fill="none" stroke="#999" stroke-width="2"/>',
    open: '<path d="M1 3l4 4 4-4" fill="none" stroke="#444" stroke-width="2"/>'
};
document.getElementById("tree").innerHTML = nodes.map(([level, icon, name, state]) =>
    `<li class="l${level}">
        <span class="arrow">${state ? `<svg width="10" height="10">${arrows[state]}</svg>` : ""}</span>
        <span class="node${name === "PAR2" ? " selected" : ""}"><svg width="16" height="16"><use href="#t-${icon}"/></svg>${name}</span>
    </li>`).join("");

// ---- snap buttons ----
const snaps = ["monitor", "extents", "zin", "zout", "zwin", "zprev", "pan", "ortho", "magnet", "gear", "quad",
    "center", "mid", "end", "near", "cross", "perp", "ext", "inter", "par", "point", "corner"];
document.getElementById("snaps").innerHTML = snaps.map(s =>
    `<button aria-label="${s}"><svg><use href="#s-${s}"/></svg></button>`).join("");

// ---- wall elevation ----
const WHITE = "#fff", RED = "#f00", BLUE = "#00f", CYAN = "#0ff", GREY = "#808080";
let shapes = "";
let texts = "";

function line(x1, y1, x2, y2, color, dash) {
    shapes += `<path d="M${x1} ${y1}L${x2} ${y2}" stroke="${color}"${dash ? ` stroke-dasharray="${dash}"` : ""}/>`;
}
function box(x1, y1, x2, y2, color) {
    shapes += `<rect x="${x1}" y="${y1}" width="${x2 - x1}" height="${y2 - y1}" stroke="${color}"/>`;
}
// filled area, covers whole pixels from x1,y1 up to x2,y2
function area(x1, y1, x2, y2, color) {
    shapes += `<rect x="${x1 - 0.5}" y="${y1 - 0.5}" width="${x2 - x1}" height="${y2 - y1}" fill="${color}"/>`;
}
function text(x, y, str, color = WHITE) {
    texts += `<text x="${x}" y="${y}" text-anchor="middle" fill="${color}" stroke="${color}">${str}</text>`;
}
function vtext(x, y, str, color = WHITE) {
    texts += `<text transform="translate(${x} ${y}) rotate(-90)" text-anchor="middle" fill="${color}" stroke="${color}">${str}</text>`;
}
function split(x1, x2, n) {
    const out = [];
    for (let i = 0; i <= n; i++) out.push(Math.round(x1 + (x2 - x1) * i / n));
    return out;
}
let seed = 7;
function noise(x1, y1, x2, y2, color, density) {
    let d = "";
    for (let y = y1; y < y2; y++) {
        for (let x = x1; x < x2; x++) {
            seed = (seed * 1103515245 + 12345) % 2147483648;
            if (seed / 2147483648 < density) d += `M${x - 0.5} ${y - 0.5}h1v1h-1z`;
        }
    }
    shapes += `<path d="${d}" fill="${color}"/>`;
}
function bricks(x1, x2, y, n) {
    const xs = split(x1, x2, n);
    for (let i = 0; i < n; i++) box(xs[i], y, xs[i + 1] - 1, y + 18, WHITE);
}
function lintel(x1, x2, y, n) {
    const xs = split(x1, x2, n);
    area(x1, y, x2, y + 16, GREY);
    for (let i = 0; i < n; i++) {
        box(xs[i], y, xs[i + 1] - 1, y + 18, BLUE);
        box(xs[i] + 8, y + 11, xs[i] + 11, y + 15, BLUE);
    }
    line(x1, y + 16, x2, y + 16, BLUE, "4 2");
}
function crown(x1, x2, n) {
    const xs = split(x1, x2, n);
    area(x1, 291, x2, 316, GREY);
    for (let i = 0; i < n; i++) {
        box(xs[i], 291, xs[i + 1] - 1, 319, BLUE);
        box(xs[i] + 18, 311, xs[i] + 20, 315, BLUE);
    }
    line(x1, 301, x2, 301, BLUE);
    line(x1, 316, x2, 316, BLUE, "4 2");
}
function redHalf(x1, x2, y) {
    box(x1, y, x2, y + 18, RED);
    box(x1, y + 14, x1 + 6, y + 18, RED);
}
function redCross(x, y) {
    box(x, y, x + 13, y + 18, RED);
    box(x + 1, y, x + 12, y + 18, RED);
    line(x + 2, y + 2, x + 11, y + 16, RED);
    line(x + 11, y + 2, x + 2, y + 16, RED);
}

// story marks
[182, 239, 583, 640].forEach(y => line(52.5, y, 105, y, WHITE, "7 2"));
[433, 471, 566].forEach(y => line(802.5, y, 906, y, WHITE, "7 2"));
vtext(81, 210, "Verga", RED);
vtext(81, 411, "Elevação", RED);
vtext(81, 612, "Contraverga", RED);
vtext(81, 678, "Fiada 1", RED);

// grouted columns
area(140, 291, 154, 320, GREY);
area(458, 291, 472, 320, GREY);
area(143, 320, 152, 566, GREY);
area(460, 320, 470, 566, GREY);
area(739, 357, 749, 566, GREY);
area(195, 357, 209, 452, GREY);
area(384, 357, 400, 452, GREY);
area(512, 357, 526, 452, GREY);
area(683, 357, 697, 452, GREY);

crown(154, 458, 8);
crown(472, 738, 7);
noise(146, 292, 150, 301, WHITE, 0.35);
noise(458, 291, 464, 302, WHITE, 0.35);
box(145, 291, 153, 301, WHITE);

const rows = [320, 339, 357, 376, 395, 414, 433, 452, 471, 490, 509, 528, 547];
rows.forEach((y, i) => {
    const even = i % 2 === 0;
    const opening = i >= 2 && i <= 6;
    if (even) {
        if (opening) {
            bricks(154, 192, y, 1);
            bricks(382, 458, y, 2);
            bricks(472, 510, y, 1);
            bricks(699, 737, y, 1);
            redHalf(192, 210, y);
            redHalf(510, 528, y);
            redHalf(680, 698, y);
        } else {
            bricks(154, 458, y, 8);
            bricks(472, i ? 737 : 699, y, i ? 7 : 6);
        }
        redCross(140, y);
        redCross(458, y);
        if (i) redCross(737, y);
    } else {
        if (opening) {
            bricks(173, 211, y, 1);
            bricks(401, 439, y, 1);
            bricks(491, 529, y, 1);
            bricks(680, 718, y, 1);
            redHalf(382, 400, y);
        } else if (i === 1) {
            lintel(173, 439, y, 14);
            lintel(491, 699, y, 11);
        } else if (i === 7) {
            lintel(173, 439, y, 14);
            lintel(491, 718, y, 12);
        } else {
            bricks(173, 439, y, 7);
            bricks(491, 718, y, 6);
        }
        redHalf(140, 172, y);
        redHalf(439, 490, y);
        if (i > 1) redHalf(718, 750, y);
    }
});

// pad at the right end
area(737, 291, 751, 357, CYAN);
area(699, 320, 737, 357, CYAN);
noise(738, 292, 751, 320, "#000", 0.3);
noise(739, 320, 751, 357, GREY, 0.25);
noise(700, 321, 739, 356, "#000", 0.3);

// vertical bars
line(147, 240, 147, 566, CYAN);
line(464, 240, 464, 566, CYAN);
line(744, 240, 744, 566, CYAN);
[201, 392, 519, 689].forEach(x => line(x, 354, x, 452, CYAN));
[471, 509, 547].forEach(y => {
    line(738, y + 3, 750, y + 3, CYAN);
    line(751, y + 2, 756, y - 3, CYAN);
});
line(135, 566, 763, 566, WHITE);

// dimensions
line(209, 435, 382, 435, RED);
line(527, 435, 683, 435, RED);
line(354, 356, 354, 452, RED);
line(656, 356, 656, 452, RED);
line(790, 286, 790, 567, RED);
line(763, 291, 793, 291, RED);
line(763, 301, 793, 301, RED);
line(763, 566, 793, 566, RED);
line(730, 291, 730, 286, RED);
line(730, 286, 735, 286, RED);
text(296, 433, "181");
text(604, 433, "161");
vtext(352, 404, "101");
vtext(653, 404, "101");
vtext(788, 296, "10");
vtext(788, 433, "280");
text(768, 289, "Coxim não detalhado", RED);
text(815, 430, "Fiada 8", RED);
text(815, 468, "Fiada 6", RED);
text(815, 563, "Fiada 1", RED);

// reinforcement
line(175, 211, 436, 211, CYAN);
line(493, 211, 748, 211, CYAN);
line(175, 612, 436, 612, CYAN);
line(493, 612, 715, 612, CYAN);
text(305, 208, "2 N1 ø10.0 C=275");
text(620, 208, "2 N2 ø10.0 C=270");
text(305, 609, "1 N1 ø10.0 C=275");
text(603, 609, "1 N3 ø10.0 C=235");
line(850, 341, 850, 467, CYAN);
line(871, 382, 871, 566, CYAN);
line(884, 240, 884, 433, CYAN);
vtext(881, 337, "3 N7 ø10.0 C=205");
vtext(847, 405, "4 N5 ø10.0 C=134");
vtext(868, 474, "3 N6 ø10.0 C=195");
[[149, 6], [204, 5], [394, 5], [467, 6], [521, 5], [692, 5], [746, 6]].forEach(([x, n]) => vtext(x, 576, "1 N" + n));

// cross sections
[193, 594].forEach(y => {
    area(837, y, 865, y + 37, BLUE);
    noise(838, y + 2, 842, y + 36, "#000", 0.3);
    noise(860, y + 2, 864, y + 36, "#000", 0.3);
    noise(842, y + 32, 860, y + 36, "#000", 0.3);
    area(843, y + 1, 859, y + 31, GREY);
});
area(845, 219, 848, 222, "#800000");
area(854, 219, 857, 222, "#800000");
area(850, 620, 853, 623, "#800000");

// plan of the first course
[[154, 458, 8], [472, 737, 7]].forEach(([x1, x2, n]) => {
    const xs = split(x1, x2, n);
    for (let i = 0; i < n; i++) {
        const x = xs[i];
        box(x, 658, xs[i + 1] - 1, 672, WHITE);
        shapes += `<path d="M${x + 3} 661h14l1 2v4l-1 2h-14zM${x + 35} 661h-14l-1 2v4l1 2h14z" stroke="${WHITE}"/>`;
    }
});
[140, 458, 737].forEach(x => {
    area(x + 3, 661, x + 12, 670, GREY);
    box(x, 658, x + 13, 690, RED);
    box(x + 2, 661, x + 11, 670, RED);
    shapes += `<path d="M${x + 3} 688v-14l2-2h5l2 2v14z" stroke="${RED}"/>`;
});
line(738, 633, 738, 671, CYAN);
line(749, 634, 749, 671, CYAN);
line(738, 671, 749, 671, CYAN);
vtext(134, 687, "PAR30", RED);
vtext(452, 687, "PAR38", RED);
vtext(731, 687, "PAR41", RED);
vtext(759, 641, "Grampo");
vtext(768, 639, "c/2 fiadas");
line(1, 712, 920, 712, WHITE);

document.getElementById("drawing").innerHTML =
    `<g fill="none" shape-rendering="crispEdges">${shapes}</g><g>${texts}</g>`;
```
